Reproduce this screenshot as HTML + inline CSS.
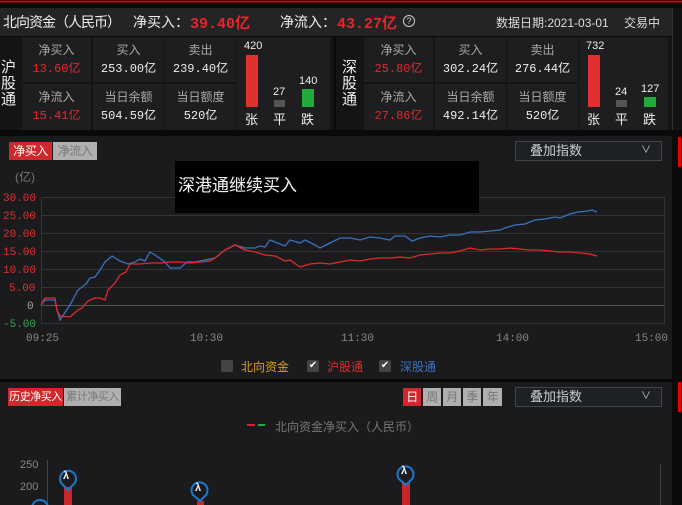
<!DOCTYPE html>
<html><head><meta charset="utf-8"><style>
*{margin:0;padding:0;box-sizing:border-box}
body{width:682px;height:505px;background:#0a0a0a;overflow:hidden;position:relative;font-family:"Liberation Sans","Noto Sans CJK SC",sans-serif;color:#ddd}
.a{position:absolute;white-space:nowrap}
.red{color:#e8262a !important}
.cell{position:absolute;background:#1e1e20;text-align:center;font-size:12px}
.cell .l{color:#aaa;margin-top:5px;line-height:16px}
.cell .v{line-height:16px;margin-top:3px;color:#eee}
.mono{font-family:"Liberation Mono","Noto Sans CJK SC",monospace}
.btn{position:absolute;font-size:11px;text-align:center;line-height:18px;letter-spacing:-0.5px}
</style></head><body>
<div class="a" style="left:0;top:0;width:682px;height:3px;background:#5a0000"></div>
<div class="a" style="left:0;top:1px;width:682px;height:1px;background:#d01010"></div>
<!-- header -->
<div class="a" style="left:0;top:8px;width:672px;height:28px;background:#242426"></div>
<div class="a" style="left:672px;top:8px;width:10px;height:122px;background:#121212;border-left:1px solid #333"></div>
<div class="a" style="left:3px;top:12px;font-size:14px;color:#eee;letter-spacing:-1px">北向资金（人民币）</div>
<div class="a" style="left:133px;top:12px;font-size:14px;color:#eee">净买入：</div>
<div class="a mono red" style="left:190px;top:12px;font-size:15px;font-weight:bold">39.40亿</div>
<div class="a" style="left:280px;top:12px;font-size:14px;color:#eee">净流入：</div>
<div class="a mono red" style="left:337px;top:12px;font-size:15px;font-weight:bold">43.27亿</div>
<div class="a" style="left:403px;top:15px;width:12px;height:12px;border:1px solid #ccc;border-radius:50%;font-size:9px;text-align:center;line-height:10px;color:#ccc">?</div>
<div class="a" style="left:496px;top:14px;font-size:12px;color:#ddd">数据日期:2021-03-01</div>
<div class="a" style="left:624px;top:14px;font-size:12px;color:#ddd">交易中</div>
<!-- stats left -->
<div class="a" style="left:0;top:37px;width:334px;height:93px;background:#141416"></div>
<div class="a" style="left:1px;top:60px;font-size:15px;line-height:16px;width:14px;color:#eee">沪<br>股<br>通</div>
<div class="cell" style="left:22px;top:37px;width:69px;height:45px"><div class="l">净买入</div><div class="v red mono">13.60亿</div></div>
<div class="cell" style="left:93px;top:37px;width:71px;height:45px"><div class="l">买入</div><div class="v mono">253.00亿</div></div>
<div class="cell" style="left:165px;top:37px;width:71px;height:45px"><div class="l">卖出</div><div class="v mono">239.40亿</div></div>
<div class="cell" style="left:22px;top:84px;width:69px;height:46px"><div class="l">净流入</div><div class="v red mono">15.41亿</div></div>
<div class="cell" style="left:93px;top:84px;width:71px;height:46px"><div class="l">当日余额</div><div class="v mono">504.59亿</div></div>
<div class="cell" style="left:165px;top:84px;width:71px;height:46px"><div class="l">当日额度</div><div class="v mono">520亿</div></div>
<div class="a" style="left:237px;top:37px;width:93px;height:93px;background:#1e1e20"></div>
<div class="a" style="left:244px;top:40px;font-size:11px;color:#eee">420</div>
<div class="a" style="left:246px;top:55px;width:12px;height:52px;background:#e03030"></div>
<div class="a" style="left:245px;top:109px;font-size:13px;color:#eee">张</div>
<div class="a" style="left:273px;top:86px;font-size:11px;color:#eee">27</div>
<div class="a" style="left:274px;top:100px;width:11px;height:7px;background:#555"></div>
<div class="a" style="left:273px;top:109px;font-size:13px;color:#eee">平</div>
<div class="a" style="left:299px;top:75px;font-size:11px;color:#eee">140</div>
<div class="a" style="left:302px;top:89px;width:12px;height:18px;background:#22aa3a"></div>
<div class="a" style="left:301px;top:109px;font-size:13px;color:#eee">跌</div>
<!-- stats right -->
<div class="a" style="left:336px;top:37px;width:336px;height:93px;background:#141416"></div>
<div class="a" style="left:342px;top:60px;font-size:15px;line-height:16px;width:14px;color:#eee">深<br>股<br>通</div>
<div class="cell" style="left:364px;top:37px;width:69px;height:45px"><div class="l">净买入</div><div class="v red mono">25.80亿</div></div>
<div class="cell" style="left:435px;top:37px;width:71px;height:45px"><div class="l">买入</div><div class="v mono">302.24亿</div></div>
<div class="cell" style="left:507px;top:37px;width:71px;height:45px"><div class="l">卖出</div><div class="v mono">276.44亿</div></div>
<div class="cell" style="left:364px;top:84px;width:69px;height:46px"><div class="l">净流入</div><div class="v red mono">27.86亿</div></div>
<div class="cell" style="left:435px;top:84px;width:71px;height:46px"><div class="l">当日余额</div><div class="v mono">492.14亿</div></div>
<div class="cell" style="left:507px;top:84px;width:71px;height:46px"><div class="l">当日额度</div><div class="v mono">520亿</div></div>
<div class="a" style="left:579px;top:37px;width:89px;height:93px;background:#1e1e20"></div>
<div class="a" style="left:586px;top:40px;font-size:11px;color:#eee">732</div>
<div class="a" style="left:588px;top:55px;width:12px;height:52px;background:#e03030"></div>
<div class="a" style="left:587px;top:109px;font-size:13px;color:#eee">张</div>
<div class="a" style="left:615px;top:86px;font-size:11px;color:#eee">24</div>
<div class="a" style="left:616px;top:100px;width:11px;height:7px;background:#555"></div>
<div class="a" style="left:615px;top:109px;font-size:13px;color:#eee">平</div>
<div class="a" style="left:641px;top:83px;font-size:11px;color:#eee">127</div>
<div class="a" style="left:644px;top:97px;width:12px;height:10px;background:#22aa3a"></div>
<div class="a" style="left:643px;top:109px;font-size:13px;color:#eee">跌</div>
<!-- chart panel -->
<div class="a" style="left:0;top:136px;width:672px;height:243px;background:#1b1b1e"></div>
<div class="a" style="left:678px;top:137px;width:3px;height:30px;background:#e00"></div>
<div class="btn" style="left:9px;top:142px;width:43px;height:18px;background:#d0282c;color:#fff;font-size:12px">净买入</div>
<div class="btn" style="left:53px;top:142px;width:44px;height:18px;background:#b0b0b0;color:#777;font-size:12px">净流入</div>
<div class="a" style="left:515px;top:141px;width:147px;height:20px;border:1px solid #444;background:#1e2124;font-size:13px;color:#ccc;line-height:18px;padding-left:14px">叠加指数<span style="position:absolute;right:10px;font-size:10px">∨</span></div>
<div class="a" style="left:15px;top:168px;font-size:12px;color:#777">(亿)</div>
<svg class="a" style="left:0;top:0" width="682" height="380">
<g stroke="#333" stroke-width="1" fill="none">
<path d="M41.5 197.5H664.5V323.5H41.5Z"/>
<path d="M41 215.5H664M41 233.5H664M41 251.5H664M41 269.5H664M41 287.5H664M41 323.5H664"/>
<path d="M41 305.5H664" stroke="#555"/>
</g>
<polyline fill="none" stroke="#3a72c0" stroke-width="1.3" points="41,305 45,300 55,300 57,310 60,320 70,305 78,290 86,284 90,278 95,277 100,270 105,262 112,256 120,261 128,264 135,262 140,259 145,261 150,252 155,255 165,262 170,268 180,268 187,262 195,262 205,260 215,258 220,254 225,250 235,245 245,248 255,248 260,246 265,247 270,240 275,242 285,246 290,240 300,243 305,240 315,245 320,248 330,243 340,238 350,238 360,240 370,237 380,238 390,240 395,236 405,236 412,241 420,238 430,236 440,237 450,235 460,235 470,232 480,232 490,231 500,230 505,228 515,225 525,224 535,220 545,219 555,217 560,218 570,214 578,212 588,211 592,210 597,212"/>
<polyline fill="none" stroke="#e02a2a" stroke-width="1.3" points="41,305 45,298 55,298 57,310 60,316 70,317 78,310 82,308 88,301 95,298 100,298 105,300 108,290 115,283 120,275 126,272 130,264 140,264 150,263 160,263 170,262 180,262 190,263 200,262 210,261 215,258 225,250 235,245 245,250 255,252 265,255 275,256 285,261 290,260 300,267 310,264 320,263 330,264 340,262 350,260 360,261 370,259 380,258 390,258 400,257 410,258 420,255 430,254 440,253 450,253 460,251 470,248 480,250 490,249 500,249 510,248 520,249 530,250 540,250 550,251 560,252 570,252 580,253 590,254 597,256"/>
<g font-family="Liberation Mono,monospace" font-size="11">
<text x="3" y="201" fill="#e03030">30.00</text><text x="3" y="219" fill="#e03030">25.00</text><text x="3" y="237" fill="#e03030">20.00</text><text x="3" y="255" fill="#e03030">15.00</text><text x="3" y="273" fill="#e03030">10.00</text><text x="9" y="291" fill="#e03030">5.00</text><text x="27" y="309" fill="#aaa">0</text><text x="3" y="327" fill="#2aa84a">-5.00</text>
<g fill="#888"><text x="26" y="341">09:25</text><text x="190" y="341">10:30</text><text x="341" y="341">11:30</text><text x="496" y="341">14:00</text><text x="635" y="341">15:00</text></g>
</g>
</svg>
<div class="a" style="left:175px;top:161px;width:304px;height:52px;background:#000"></div>
<div class="a" style="left:178px;top:171px;font-size:17px;color:#f4f4f4">深港通继续买入</div>
<div class="a" style="left:221px;top:360px;width:12px;height:12px;background:#444;border-radius:2px"></div>
<div class="a" style="left:241px;top:358px;font-size:12px;color:#d8a020">北向资金</div>
<div class="a" style="left:307px;top:360px;width:12px;height:12px;background:#444;border-radius:2px;color:#fff;font-size:10px;line-height:12px;text-align:center">✔</div>
<div class="a" style="left:327px;top:358px;font-size:12px;color:#e02a2a">沪股通</div>
<div class="a" style="left:379px;top:360px;width:12px;height:12px;background:#444;border-radius:2px;color:#fff;font-size:10px;line-height:12px;text-align:center">✔</div>
<div class="a" style="left:400px;top:358px;font-size:12px;color:#3a72c0">深股通</div>
<!-- bottom panel -->
<div class="a" style="left:0;top:382px;width:672px;height:123px;background:#1b1b1e"></div>
<div class="a" style="left:678px;top:382px;width:3px;height:30px;background:#e00"></div>
<div class="btn" style="left:8px;top:388px;width:55px;height:18px;background:#d0282c;color:#fff">历史净买入</div>
<div class="btn" style="left:64px;top:388px;width:57px;height:18px;background:#b0b0b0;color:#777">累计净买入</div>
<div class="btn" style="left:403px;top:388px;width:18px;height:18px;background:#d0282c;color:#fff;font-size:12px">日</div>
<div class="btn" style="left:423px;top:388px;width:18px;height:18px;background:#b0b0b0;color:#777;font-size:12px">周</div>
<div class="btn" style="left:443px;top:388px;width:18px;height:18px;background:#b0b0b0;color:#777;font-size:12px">月</div>
<div class="btn" style="left:463px;top:388px;width:18px;height:18px;background:#b0b0b0;color:#777;font-size:12px">季</div>
<div class="btn" style="left:483px;top:388px;width:19px;height:18px;background:#b0b0b0;color:#777;font-size:12px">年</div>
<div class="a" style="left:515px;top:387px;width:147px;height:20px;border:1px solid #444;background:#1e2124;font-size:13px;color:#ccc;line-height:18px;padding-left:14px">叠加指数<span style="position:absolute;right:10px;font-size:10px">∨</span></div>
<div class="a" style="left:247px;top:424px;width:8px;height:2px;background:#d0282c"></div>
<div class="a" style="left:258px;top:424px;width:7px;height:2px;background:#2aa84a"></div>
<div class="a" style="left:275px;top:418px;font-size:12px;color:#777">北向资金净买入（人民币）</div>
<svg class="a" style="left:0;top:380px" width="682" height="125">
<path d="M47.5 80V125M660.5 84V125" stroke="#444"/>
<g fill="#888" font-size="11" font-family="Liberation Sans,sans-serif"><text x="20" y="88">250</text><text x="20" y="110">200</text></g>
<rect x="64" y="107" width="8" height="18" fill="#c8282c"/>
<rect x="197" y="121" width="7" height="4" fill="#c8282c"/>
<rect x="402" y="103" width="8" height="22" fill="#c8282c"/>
<g fill="none" stroke="#1a7ad0" stroke-width="2">
<path d="M62 104L68 110L74 104A8 8 0 1 0 62 104Z"/>
<path d="M193 115L200 121L206 115A8 8 0 1 0 193 115Z"/>
<path d="M399 99L406 105L412 99A8 8 0 1 0 399 99Z"/>
<circle cx="40" cy="128" r="8"/>
</g>
<g fill="#eee" font-size="11" font-weight="bold"><text x="63" y="99">λ</text><text x="195" y="111">λ</text><text x="401" y="94">λ</text></g>
</svg>
</body></html>
